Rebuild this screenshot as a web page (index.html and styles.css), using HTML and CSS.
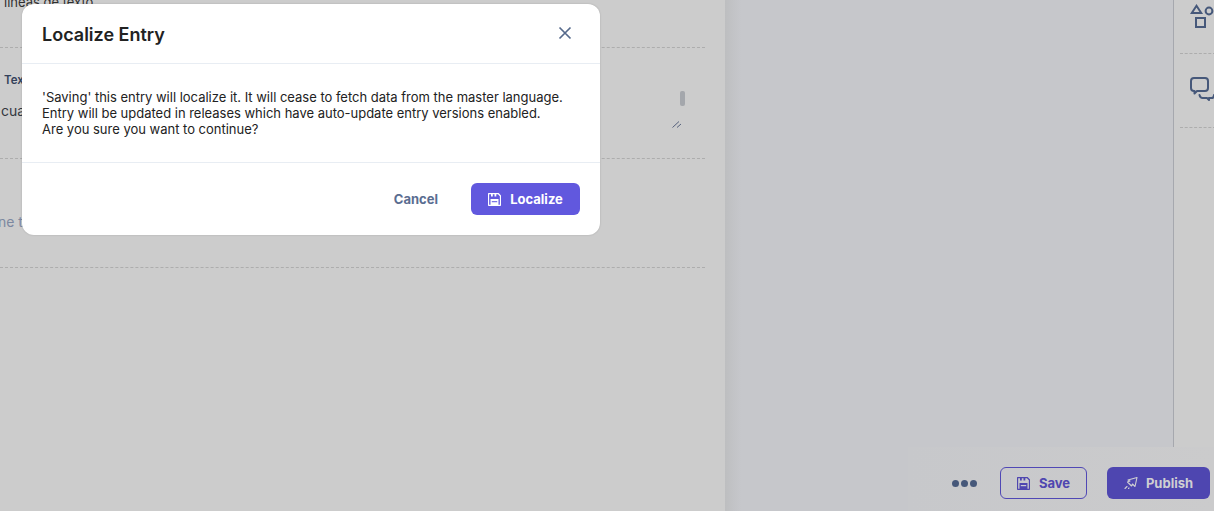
FILE: index.html
```html
<!DOCTYPE html>
<html lang="en">
<head>
<meta charset="utf-8">
<title>Localize Entry</title>
<link rel="stylesheet" href="styles.css">
</head>
<body>
<div class="page">
  <main class="main">
    <section class="row row-a"><p class="clip-text">lineas de texto</p></section>
    <section class="row row-b">
      <div class="field-label">Text</div>
      <div class="field-input">
        <span class="value">cuando</span>
        <span class="scroll-thumb"></span>
        <svg class="grip" viewBox="0 0 10 8" width="10" height="8"><path d="M0.500 7.500 7 1.500M5 7.500 9 4" fill="none" stroke="#56617c" stroke-width="1"/></svg>
      </div>
    </section>
    <section class="row row-c"><span class="placeholder">ne tag</span></section>
  </main>
  <aside class="panel">
    <div class="panel-body"></div>
    <div class="rail">
      <div class="rail-item rail-top">
        <svg viewBox="0 0 26 30" width="26" height="30"><g fill="none" stroke="#46587a" stroke-width="2"><path d="M1.800 9 6.500 1.800 11.200 9Z"/><circle cx="19" cy="7" r="3.400"/><rect x="6" y="14" width="9" height="9"/></g></svg>
      </div>
      <div class="rail-item rail-second">
        <svg viewBox="0 0 26 28" width="26" height="28"><g fill="none" stroke="#46587a" stroke-width="2" stroke-linejoin="round" stroke-linecap="round"><path d="M4 1h11a3 3 0 0 1 3 3v7a3 3 0 0 1-3 3H7l-2.500 2.500V14H4a3 3 0 0 1-3-3V4a3 3 0 0 1 3-3Z"/><path d="M9.500 18c.5 2 1.500 3 3 3h4.500l2 2v-2h2.500c1.500 0 2.500-1 2.500-3"/></g></svg>
      </div>
    </div>
  </aside>
</div>
<footer class="actions">
  <span class="dots"><i></i><i></i><i></i></span>
  <button class="btn btn-outline">
    <svg class="ico" viewBox="0 0 13 13" width="13" height="13"><path d="M1 .5h9.200L12.500 3v8.500a1 1 0 0 1-1 1h-10a1 1 0 0 1-1-1v-10a1 1 0 0 1 .5-1Z" fill="none" stroke="#4f46b0" stroke-width="1.300"/><path d="M3 0h1.800v3.600H3zM6.500 0h1.800v3.600H6.500z" fill="#4f46b0"/><path d="M2.500 6h8v6h-8z" fill="#4f46b0"/><path d="M3.800 8h5.400v1.200H3.800z" fill="#c9c9d4"/></svg>
    Save
  </button>
  <button class="btn btn-dark">
    <svg class="ico" viewBox="0 0 14 14" width="14" height="14"><g fill="none" stroke="#d0d0d2" stroke-width="1.100" stroke-linejoin="round" stroke-linecap="round"><path d="M4 4 13 1.500 11 10.500 8.500 8 7.500 10 3.500 6 6 5Z"/><path d="M3 10.500 1 12.500M5 12l-.5.500"/></g></svg>
    Publish
  </button>
</footer>
<div class="modal">
  <header class="modal-head">
    <h2 class="modal-title">Localize Entry</h2>
    <svg class="close" viewBox="0 0 14 14" width="14" height="14"><path d="M1.500 1.500 12.500 12.500M12.500 1.500 1.500 12.500" fill="none" stroke="#566a8c" stroke-width="1.700"/></svg>
  </header>
  <div class="modal-body">
    <p>'Saving' this entry will localize it. It will cease to fetch data from the master language.</p>
    <p>Entry will be updated in releases which have auto-update entry versions enabled.</p>
    <p>Are you sure you want to continue?</p>
  </div>
  <div class="modal-foot">
    <button class="btn btn-text">Cancel</button>
    <button class="btn btn-primary">
      <svg class="ico" viewBox="0 0 13 13" width="13" height="13"><path d="M1 .5h9.200L12.500 3v8.500a1 1 0 0 1-1 1h-10a1 1 0 0 1-1-1v-10a1 1 0 0 1 .5-1Z" fill="none" stroke="#fff" stroke-width="1.300"/><path d="M3 0h1.800v3.600H3zM6.500 0h1.800v3.600H6.500z" fill="#fff"/><path d="M2.500 6h8v6h-8z" fill="#fff"/><path d="M3.800 8h5.400v1.200H3.800z" fill="#7d75e4"/></svg>
      Localize
    </button>
  </div>
</div>
</body>
</html>
```

FILE: styles.css
```css
* { box-sizing: border-box; }
html, body { margin: 0; height: 100%; overflow: hidden; }
body {
  font-family: Inter, "Liberation Sans", sans-serif;
  background: #cccccc;
  color: #222222;
  position: relative;
}
.page { display: flex; height: 511px; }
.main { width: 725px; flex: none; padding-right: 20px; overflow: hidden; }
.row { border-bottom: 1px dashed #adadad; position: relative; overflow: hidden; }
.row-a { height: 48px; }
.row-b { height: 111px; }
.row-c { height: 109px; }
.clip-text { margin: -6px 0 0 4px; font-size: 13px; line-height: 17px; color: #303030; white-space: nowrap; }
.field-label { margin: 24px 0 0 4px; font-size: 11.500px; line-height: 16px; font-weight: 600; color: #33415a; }
.field-input { display: flex; margin-top: 15px; height: 32px; position: relative; }
.value { margin-left: 1px; font-size: 14px; line-height: 15px; color: #33383f; }
.scroll-thumb { position: absolute; left: 680px; top: -12px; width: 5px; height: 15px; border-radius: 2px; background: #a4a7ac; }
.grip { position: absolute; left: 672px; top: 17px; }
.placeholder { display: block; margin: 54px 0 0 -2px; font-size: 14px; line-height: 17px; color: #7c88a0; }
.panel { flex: 1; display: flex; background: linear-gradient(90deg, #bdbec0 0, #c2c3c6 8px, #c6c7cb 16px); }
.panel-body { width: 449px; flex: none; border-right: 1px solid #a6a8ae; height: 447px; }
.rail { flex: 1; background: #cccccc; height: 447px; }
.rail-item { border-bottom: 1px dashed #adadad; margin-left: 6px; position: relative; overflow: hidden; }
.rail-top { height: 54px; padding: 4px 0 0 10px; }
.rail-second { height: 74px; padding: 23px 0 0 10px; }
.actions {
  position: absolute; left: 908px; right: 0; top: 447px; height: 64px;
  display: flex; align-items: center; padding: 8px 4px 0 44px;
  background: linear-gradient(90deg, #c7c8cb, #cbcbcc);
}
.dots { display: flex; gap: 2px; margin-right: 23px; }
.dots i { width: 7px; height: 7px; border-radius: 50%; background: #46587a; }
.btn {
  font-family: inherit; font-size: 13px; font-weight: 700; height: 32px;
  display: inline-flex; align-items: center; justify-content: center; gap: 9px;
  border-radius: 6px; border: 1px solid transparent; background: none; padding: 0;
}
.btn-outline { width: 87px; border-color: #5048b5; color: #4f46b0; margin-right: 20px; }
.btn-dark { width: 103px; background: #4e46b0; color: #cfcfd2; gap: 8px; }
.modal {
  position: absolute; left: 22px; top: 4px; width: 578px; height: 231px;
  background: #ffffff; border-radius: 12px; overflow: hidden;
  display: flex; flex-direction: column;
  box-shadow: 0 0 2px rgba(0, 0, 0, .18);
}
.modal-head {
  height: 60px; flex: none; display: flex; align-items: center; justify-content: space-between;
  padding: 2px 28px 0 20px; border-bottom: 1px solid #e8edf3;
}
.modal-title { margin: 0; font-size: 18px; line-height: 24px; font-weight: 600; color: #222222; }
.close { display: block; margin-top: -4px; }
.modal-body {
  height: 98px; flex: none; padding: 25px 20px 0;
  font-size: 13px; line-height: 16px; color: #222222; letter-spacing: -0.010px;
}
.modal-body p { margin: 0; }
.modal-foot {
  flex: 1; display: flex; align-items: center; justify-content: flex-end; gap: 32px;
  padding: 0 20px; border-top: 1px solid #e8edf3;
}
.btn-text { color: #5a6d91; }
.btn-primary { width: 109px; background: #6158de; color: #ffffff; }
.ico { display: block; flex: none; }
```
